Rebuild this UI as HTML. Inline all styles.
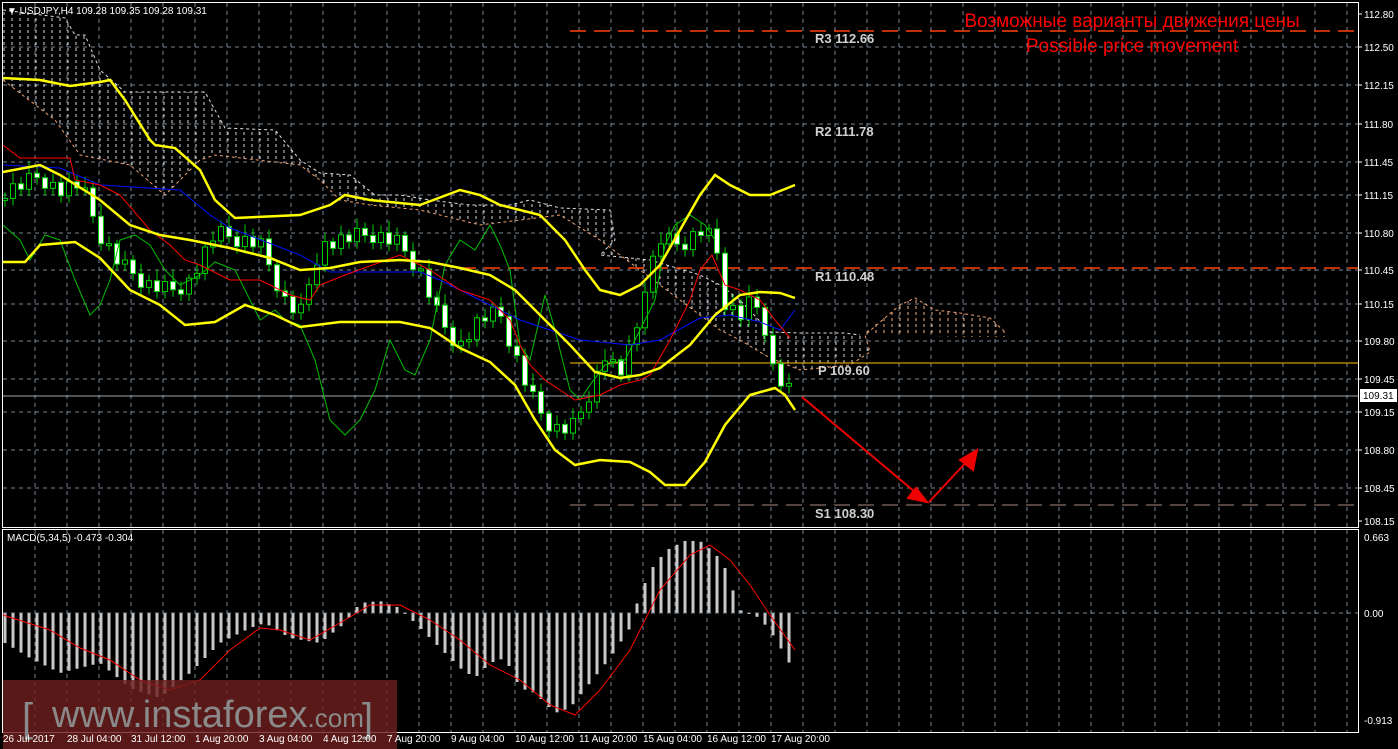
<!DOCTYPE html>
<html><head><meta charset="utf-8"><style>
html,body{margin:0;padding:0;background:#000;width:1398px;height:749px;overflow:hidden}
svg{display:block}
text{font-family:"Liberation Sans",sans-serif}
</style></head><body>
<svg id="s" width="1398" height="749" xmlns="http://www.w3.org/2000/svg">
<defs>
<pattern id="hatch" width="8" height="6" patternUnits="userSpaceOnUse">
<line x1="4" y1="0" x2="4" y2="3" stroke="#d8d8d8" stroke-width="1"/>
</pattern>
<pattern id="hatch2" width="8" height="6" patternUnits="userSpaceOnUse">
<line x1="4" y1="0" x2="4" y2="3" stroke="#f0b080" stroke-width="1"/>
</pattern>
</defs>
<rect width="1398" height="749" fill="#000"/>
<g id="grid" stroke="#7a8694" stroke-width="1" stroke-dasharray="4,4"></g>
<polygon fill="url(#hatch)" points="3,10 65,18 75,35 85,35 100,70 125,92 205,92 225,128 275,130 300,160 320,173 350,175 375,195 400,195 430,200 470,205 510,205 530,200 560,208 610,210 615,240 600,255 650,260 700,275 720,285 740,300 770,332 800,333 845,333 860,335 870,352 850,365 800,370 770,358 740,340 720,330 680,300 620,255 600,240 560,215 480,225 420,210 370,205 340,200 320,180 300,165 215,155 200,160 165,195 130,165 80,155 55,120 3,80"/>
<polygon fill="url(#hatch2)" points="865,332 900,305 915,298 935,310 960,313 990,318 1005,332 1005,337 960,337 900,335 865,335"/>
<polyline fill="none" stroke="#f0a070" stroke-width="1" stroke-dasharray="3,3" points="3,80 55,120 80,155 130,165 165,195 200,160 215,155 300,165 320,180 340,200 370,205 420,210 480,225 560,215 600,240 620,255 680,300 720,330 740,340 770,358 800,370 850,365 870,352 865,335 900,305 915,298 935,310 960,313 990,318 1005,332"/>
<polyline fill="none" stroke="#e0e0e0" stroke-width="1" stroke-dasharray="3,3" points="3,10 65,18 75,35 85,35 100,70 125,92 205,92 225,128 275,130 300,160 320,173 350,175 375,195 400,195 430,200 470,205 510,205 530,200 560,208 610,210 615,240 600,255 650,260 700,275 720,285 740,300 770,332 800,333 845,333 860,335"/>
<line x1="570" y1="31" x2="1358" y2="31" stroke="#ff4000" stroke-width="1.5" stroke-dasharray="16,8"/>
<line x1="460" y1="268" x2="1358" y2="268" stroke="#ff4000" stroke-width="1.5" stroke-dasharray="16,8"/>
<line x1="570" y1="505" x2="1358" y2="505" stroke="#aa8880" stroke-width="1" stroke-dasharray="16,8"/>
<line x1="570" y1="363" x2="1358" y2="363" stroke="#ffc000" stroke-width="1"/>
<line x1="3" y1="396" x2="1358" y2="396" stroke="#a0a8b0" stroke-width="1"/>
<g id="cand"></g>
<polyline fill="none" stroke="#00c000" stroke-width="1" points="3,225 20,240 30,260 45,235 60,240 75,280 90,315 100,305 110,280 120,240 135,235 150,245 165,270 180,285 200,275 215,262 235,270 260,320 275,310 285,320 300,325 315,360 330,420 345,435 360,420 375,390 390,340 405,370 415,375 430,340 445,265 460,240 475,250 490,225 500,245 510,270 520,345 530,360 545,295 555,330 570,390 580,400 590,385 605,365 625,360 640,330 655,300 665,245 675,225 690,215 705,225 715,240"/>
<polyline fill="none" stroke="#0010ff" stroke-width="1" points="3,165 60,168 100,185 180,190 210,215 230,228 300,255 330,272 420,272 440,280 480,300 520,320 550,330 580,340 630,345 660,340 700,318 730,315 760,322 780,330 795,310"/>
<polyline fill="none" stroke="#ff0000" stroke-width="1" points="3,145 20,158 70,158 75,180 100,185 120,195 150,230 170,245 185,260 200,265 230,280 260,280 290,295 310,300 320,285 345,275 400,255 430,270 460,290 490,300 510,320 520,345 530,365 545,380 575,400 600,395 620,385 640,380 650,375 670,340 690,300 700,270 712,255 725,285 740,290 760,300 775,320 790,338"/>
<g fill="none" stroke="#ffff00" stroke-width="2.5">
<polyline points="3,78 40,80 70,86 100,82 110,80 125,100 150,140 155,145 175,148 200,170 215,200 235,218 300,215 330,205 345,195 370,200 420,205 460,190 480,195 500,205 540,215 565,240 585,270 600,290 620,295 640,285 660,265 680,230 700,195 715,175 730,185 750,195 770,195 795,185"/>
<polyline points="3,172 40,165 60,175 100,200 130,225 160,235 190,240 230,248 270,258 300,270 330,268 360,262 400,260 430,262 460,268 490,275 515,290 545,320 570,345 595,372 620,378 640,375 660,368 690,345 715,315 740,295 760,292 780,293 795,298"/>
<polyline points="3,262 25,262 40,245 75,242 100,258 130,290 160,305 185,325 215,322 245,305 275,315 300,327 340,322 370,322 400,322 430,328 460,348 490,362 515,385 535,420 555,450 575,465 600,460 630,462 650,472 665,485 685,485 705,462 725,425 750,395 775,388 785,395 795,410"/>
</g>
<g stroke="#ee0000" stroke-width="2" fill="#ee0000">
<line x1="802" y1="397" x2="922" y2="498"/>
<polygon points="927,502 908,498 916,488"/>
<line x1="929" y1="502" x2="972" y2="456"/>
<polygon points="977,450 973,470 960,460"/>
</g>
<g font-family="Liberation Mono,monospace" font-size="13" font-weight="bold" fill="#d0d0d0">
<text x="815" y="43">R3 112.66</text>
<text x="815" y="136">R2 111.78</text>
<text x="815" y="281">R1 110.48</text>
<text x="818" y="375">P 109.60</text>
<text x="815" y="518">S1 108.30</text>
</g>
<text x="1132" y="27" font-size="19" fill="#ff0000" text-anchor="middle">Возможные варианты движения цены</text>
<text x="1132" y="52" font-size="19" fill="#ff0000" text-anchor="middle">Possible price movement</text>
<g id="macd" fill="#c8c8c8"></g>
<line x1="3" y1="613" x2="1358" y2="613" stroke="#7a8694" stroke-dasharray="4,4"/>
<polyline fill="none" stroke="#ff0000" stroke-width="1" points="3,615 50,630 80,648 110,660 140,680 170,690 200,680 230,650 260,628 280,630 310,640 345,620 370,605 400,605 430,620 460,640 490,665 520,680 550,705 575,715 600,690 630,650 660,590 690,555 710,545 730,560 750,585 770,615 795,650"/>
<rect x="2.5" y="2.5" width="1356" height="525" fill="none" stroke="#fff"/>
<rect x="2.5" y="529.5" width="1356" height="203" fill="none" stroke="#fff"/>
<text x="7" y="14" font-size="10" fill="#fff">▼ USDJPY,H4  109.28 109.35 109.28 109.31</text>
<text x="7" y="541" font-size="10" fill="#fff">MACD(5,34,5) -0.473 -0.304</text>
<g id="ylab" font-size="10" fill="#fff"></g>
<rect x="1360" y="389" width="37" height="13" fill="#fff"/>
<text x="1363" y="399" font-size="10" fill="#000">109.31</text>
<rect x="3" y="680" width="394" height="69" fill="rgba(110,30,30,0.82)"/>
<text x="22" y="731" font-size="40" fill="#8a8a8a">[</text>
<text x="52" y="727" font-size="38" fill="#8a8a8a">www.instaforex<tspan font-size="26">.com</tspan></text>
<text x="362" y="731" font-size="40" fill="#8a8a8a">]</text>
<g id="xlab" font-size="10" fill="#fff"></g>
</svg>
<script>
var NS="http://www.w3.org/2000/svg";
function el(p,t,a,tx){var e=document.createElementNS(NS,t);for(var k in a)e.setAttribute(k,a[k]);if(tx)e.textContent=tx;document.getElementById(p).appendChild(e);return e;}
for(var x=35;x<1358;x+=32){el("grid","line",{x1:x,y1:3,x2:x,y2:527});el("grid","line",{x1:x,y1:530,x2:x,y2:732});}
var ys=[[14,"112.80"],[47,"112.50"],[85,"112.15"],[124,"111.80"],[162,"111.45"],[195,"111.15"],[233,"110.80"],[270,"110.45"],[304,"110.15"],[341,"109.80"],[379,"109.45"],[412,"109.15"],[450,"108.80"],[488,"108.45"],[521,"108.15"]];
ys.forEach(function(v){if(v[0]>20&&v[0]<520)el("grid","line",{x1:3,y1:v[0],x2:1358,y2:v[0]});el("ylab","text",{x:1364,y:v[0]+4},v[1]);el("ylab","line",{x1:1358,y1:v[0],x2:1362,y2:v[0],stroke:"#fff"});});
[[537,"0.663"],[613,"0.00"],[720,"-0.913"]].forEach(function(v){el("ylab","text",{x:1364,y:v[0]+4},v[1]);});
var xl=["26 Jul 2017","28 Jul 04:00","31 Jul 12:00","1 Aug 20:00","3 Aug 04:00","4 Aug 12:00","7 Aug 20:00","9 Aug 04:00","10 Aug 12:00","11 Aug 20:00","15 Aug 04:00","16 Aug 12:00","17 Aug 20:00"];
xl.forEach(function(t,i){el("xlab","text",{x:3+i*64,y:742},t);});
function interp(pts,x){if(x<=pts[0][0])return pts[0][1];for(var i=0;i<pts.length-1;i++){if(x>=pts[i][0]&&x<=pts[i+1][0]){var f=(x-pts[i][0])/(pts[i+1][0]-pts[i][0]);return pts[i][1]+f*(pts[i+1][1]-pts[i][1]);}}return pts[pts.length-1][1];}
var pp=[[5,190],[20,185],[40,175],[60,190],[80,185],[100,235],[120,265],[150,285],[170,290],[190,280],[215,235],[240,240],[260,245],[285,300],[300,315],[320,245],[345,240],[375,235],[400,245],[420,270],[440,320],[460,345],[480,320],[500,315],[515,355],[530,395],[545,420],[560,430],[575,425],[590,390],[605,355],[620,375],[635,340],[645,285],[660,240],[680,245],[700,230],[715,240],[725,300],[740,315],[755,295],[765,345],[775,370],[785,385],[795,393]];
var prevC=pp[0][1]+10;
for(var x=5;x<=795;x+=8){var c=interp(pp,x)+((x*37)%17-8)*1.2;var o=prevC;var hi=Math.min(o,c)-4-(x*13)%9;var lo=Math.max(o,c)+4+(x*7)%8;
el("cand","line",{x1:x,y1:hi,x2:x,y2:lo,stroke:"#00d000"});
var bt=Math.min(o,c),bh=Math.max(2,Math.abs(c-o));
el("cand","rect",{x:x-2.5,y:bt,width:5,height:bh,fill:(c>o?"#fff":"#000"),stroke:"#00d000"});prevC=c;}
var mp=[[5,30],[30,45],[60,60],[100,50],[130,75],[160,85],[190,60],[220,30],[250,15],[265,10],[290,25],[320,30],[345,10],[360,-10],[380,-12],[400,-5],[420,15],[440,35],[460,55],[475,65],[490,50],[505,45],[520,75],[535,80],[555,100],[570,95],[590,70],[610,45],[630,15],[640,-20],[655,-50],[670,-65],[685,-72],[700,-72],[715,-60],[725,-45],[740,-3],[760,5],[775,25],[795,60]];
for(var x=5;x<=795;x+=8){var v=interp(mp,x);el("macd","rect",{x:x-1.5,y:v>0?613:613+v,width:3,height:Math.max(1,Math.abs(v))});}
</script>
</body></html>
